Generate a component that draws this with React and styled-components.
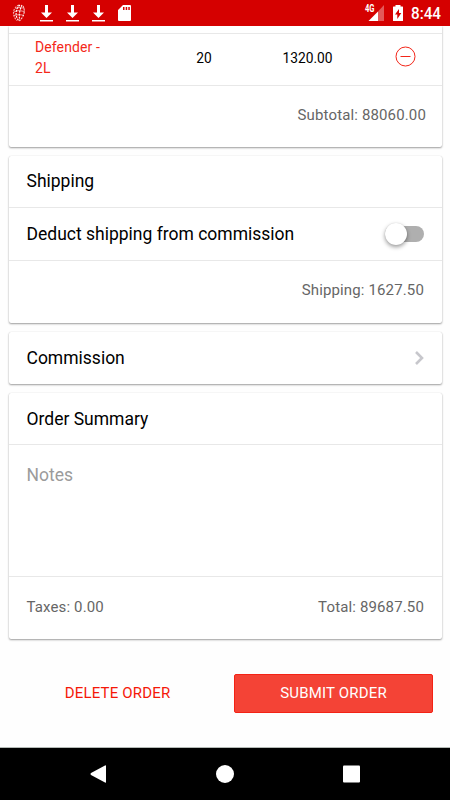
import React from "react";
import styled, { createGlobalStyle } from "styled-components";

const GlobalStyle = createGlobalStyle`
  * { box-sizing: border-box; }
  body { margin: 0; background: #fefefe; font-family: Roboto, sans-serif; color: #000; overflow: hidden; }
`;

const Screen = styled.div`
  width: 450px;
  height: 800px;
  display: flex;
  flex-direction: column;
  overflow: hidden;
`;

const StatusBar = styled.header`
  flex: none;
  height: 26px;
  background: #d50000;
  svg { display: block; }
`;

const Content = styled.main`
  flex: 1;
  padding: 0 8px 0 9px;
  overflow: hidden;
`;

const Card = styled.section`
  height: ${(p) => p.$height}px;
  margin-bottom: 9px;
  background: #fff;
  border-radius: ${(p) => (p.$cut ? "0 0 2px 2px" : "2px")};
  box-shadow: 0 1px 2px rgba(0, 0, 0, 0.38), 0 0 1px rgba(0, 0, 0, 0.14);
`;

const Row = styled.div`
  display: flex;
  align-items: center;
  justify-content: ${(p) => (p.$end ? "flex-end" : "space-between")};
  height: ${(p) => p.$height}px;
  padding: 0 18px 0 17.5px;
  border-bottom: ${(p) => (p.$line ? "1px solid #e8e8e8" : "none")};
`;

const Title = styled.h2`
  margin: 0;
  font-size: 17.5px;
  font-weight: 400;
  line-height: 24px;
`;

const Amount = styled.span`
  font-size: 15px;
  line-height: 20px;
  letter-spacing: 0.14px;
  margin-right: ${(p) => p.$shift || 0}px;
  color: #666;
`;

const ItemRow = styled.div`
  display: grid;
  grid-template-columns: 142px 106px 101px 1fr;
  align-items: start;
  height: 52px;
  padding-top: 3px;
  border-bottom: 1px solid #e8e8e8;
  font-size: 13.75px;
  line-height: 42px;
  text-align: center;
  svg { display: block; margin: 9px 0 0 37px; }
`;

const ItemName = styled.span`
  width: 100px;
  padding-left: 26px;
  color: #f4281a;
  font-size: 14px;
  line-height: 21px;
  letter-spacing: 0.1px;
  text-align: left;
`;

const TopLine = styled.div`
  height: 8px;
  border-bottom: 1px solid #e8e8e8;
`;

const Toggle = styled.div`
  display: flex;
  align-items: center;
  width: 39px;
  height: 16px;
  border-radius: 8px;
  background: #afafaf;
`;

const Knob = styled.div`
  width: 22px;
  height: 22px;
  border-radius: 50%;
  background: #fff;
  box-shadow: 0 2px 4px rgba(0, 0, 0, 0.4), 0 0 1px rgba(0, 0, 0, 0.15);
`;

const Notes = styled.div`
  height: 132px;
  padding: 18px 17.5px;
  border-bottom: 1px solid #e8e8e8;
  color: #9b9b9b;
  font-size: 17.5px;
  line-height: 24px;
`;

const Actions = styled.div`
  display: flex;
  justify-content: space-between;
  padding: 26px 9px 0 8px;
`;

const Button = styled.button`
  width: 199px;
  height: 39px;
  padding: 0 0 2px ${(p) => (p.$primary ? 0 : 2)}px;
  border: 1px solid ${(p) => (p.$primary ? "#f42215" : "transparent")};
  border-radius: 2px;
  background: ${(p) => (p.$primary ? "#f44336" : "transparent")};
  color: ${(p) => (p.$primary ? "#fff" : "#f51808")};
  font: 400 15px/20px Roboto, sans-serif;
  letter-spacing: 0.18px;
`;

const NavBar = styled.nav`
  flex: none;
  height: 53px;
  border-top: 1px solid #b4bab6;
  background: #000;
  svg { display: block; }
`;

function Download({ x }) {
  return (
    <g transform={`translate(${x} 5)`} fill="#fff">
      <path d="M5 0h3v7.500h4L6.500 13 1 7.500h4z" />
      <path d="M0 15h13v1.500H0z" />
    </g>
  );
}

function StatusIcons() {
  return (
    <svg width="450" height="26" viewBox="0 0 450 26">
      <g fill="none" stroke="#fff" strokeWidth="1.1" strokeDasharray="2 1">
        <path d="M19 5C12 8 12 16 17 20.500" opacity=".7" />
        <path d="M20 5C15 9 15 17 19 21" />
        <path d="M22 5C19.500 10 18.500 16 20 21" />
        <path d="M23 6C25.500 10 24 17 20 20" opacity=".8" />
        <path d="M15.500 8.500c3-1.500 6-1 9 0M14 12c4-2 7-1.500 11 0M14 15.500c3-1 7-1 10 0" strokeWidth=".9" strokeDasharray="none" opacity=".7" />
      </g>
      <Download x={40} />
      <Download x={66} />
      <Download x={92} />
      <path fill="#fff" fillRule="evenodd" d="M123 5h7q1 0 1 1v14q0 1-1 1h-11q-1 0-1-1V10zm0 2v3h1.500V7zm2.700 0v3h1.500V7zm2.600 0v3h1.500V7z" />
      <text x="365" y="12" fill="#fff" fontSize="10" fontWeight="700" textLength="9.500" lengthAdjust="spacingAndGlyphs">4G</text>
      <path fill="#fff" d="M378 11.500V21h-9.500z" />
      <path fill="#fff" opacity=".35" d="M384 5v16h-6v-9.500z" />
      <path fill="#fff" fillRule="evenodd" d="M395.500 5h5v1.500h2q.5 0 .5.500V20.500q0 .5-.5.500h-9q-.5 0-.5-.500V7q0-.500.500-.500h2zm3.500 4l-4 5.500h2.300V19l4-6h-2.300z" />
      <text x="411" y="19.300" fill="#fff" fontSize="16" fontWeight="500" textLength="30" lengthAdjust="spacingAndGlyphs">8:44</text>
    </svg>
  );
}

export default function App() {
  return (
    <Screen>
      <GlobalStyle />
      <StatusBar><StatusIcons /></StatusBar>
      <Content>
        <Card $height={120.5} $cut>
          <TopLine />
          <ItemRow>
            <ItemName>Defender - 2L</ItemName>
            <span>20</span>
            <span>1320.00</span>
            <svg width="22" height="22" viewBox="0 0 22 22" fill="none" stroke="#f32619">
              <circle cx="10.500" cy="10.500" r="9.500" />
              <path d="M5.500 10.500h10" />
            </svg>
          </ItemRow>
          <Row $height={58} $end><Amount $shift={-2}>Subtotal: 88060.00</Amount></Row>
        </Card>
        <Card $height={167}>
          <Row $height={52} $line><Title>Shipping</Title></Row>
          <Row $height={53} $line>
            <Title>Deduct shipping from commission</Title>
            <Toggle><Knob /></Toggle>
          </Row>
          <Row $height={59} $end><Amount>Shipping: 1627.50</Amount></Row>
        </Card>
        <Card $height={52.5}>
          <Row $height={52.5}>
            <Title>Commission</Title>
            <svg width="9" height="14" viewBox="0 0 9 14" fill="none" stroke="#c7c7cc" strokeWidth="2.600">
              <path d="M1 1l6 6-6 6" />
            </svg>
          </Row>
        </Card>
        <Card $height={246}>
          <Row $height={52} $line><Title>Order Summary</Title></Row>
          <Notes>Notes</Notes>
          <Row $height={59}>
            <Amount>Taxes: 0.00</Amount>
            <Amount>Total: 89687.50</Amount>
          </Row>
        </Card>
        <Actions>
          <Button>DELETE ORDER</Button>
          <Button $primary>SUBMIT ORDER</Button>
        </Actions>
      </Content>
      <NavBar>
        <svg width="450" height="52" viewBox="0 0 450 52" fill="#fff">
          <path d="M105 17.500q1-.6 1 .5v16q0 1.100-1 .5L91 27q-1.200-1 0-2z" />
          <circle cx="225" cy="26" r="9" />
          <rect x="343" y="17.500" width="17" height="17" rx="1" />
        </svg>
      </NavBar>
    </Screen>
  );
}
